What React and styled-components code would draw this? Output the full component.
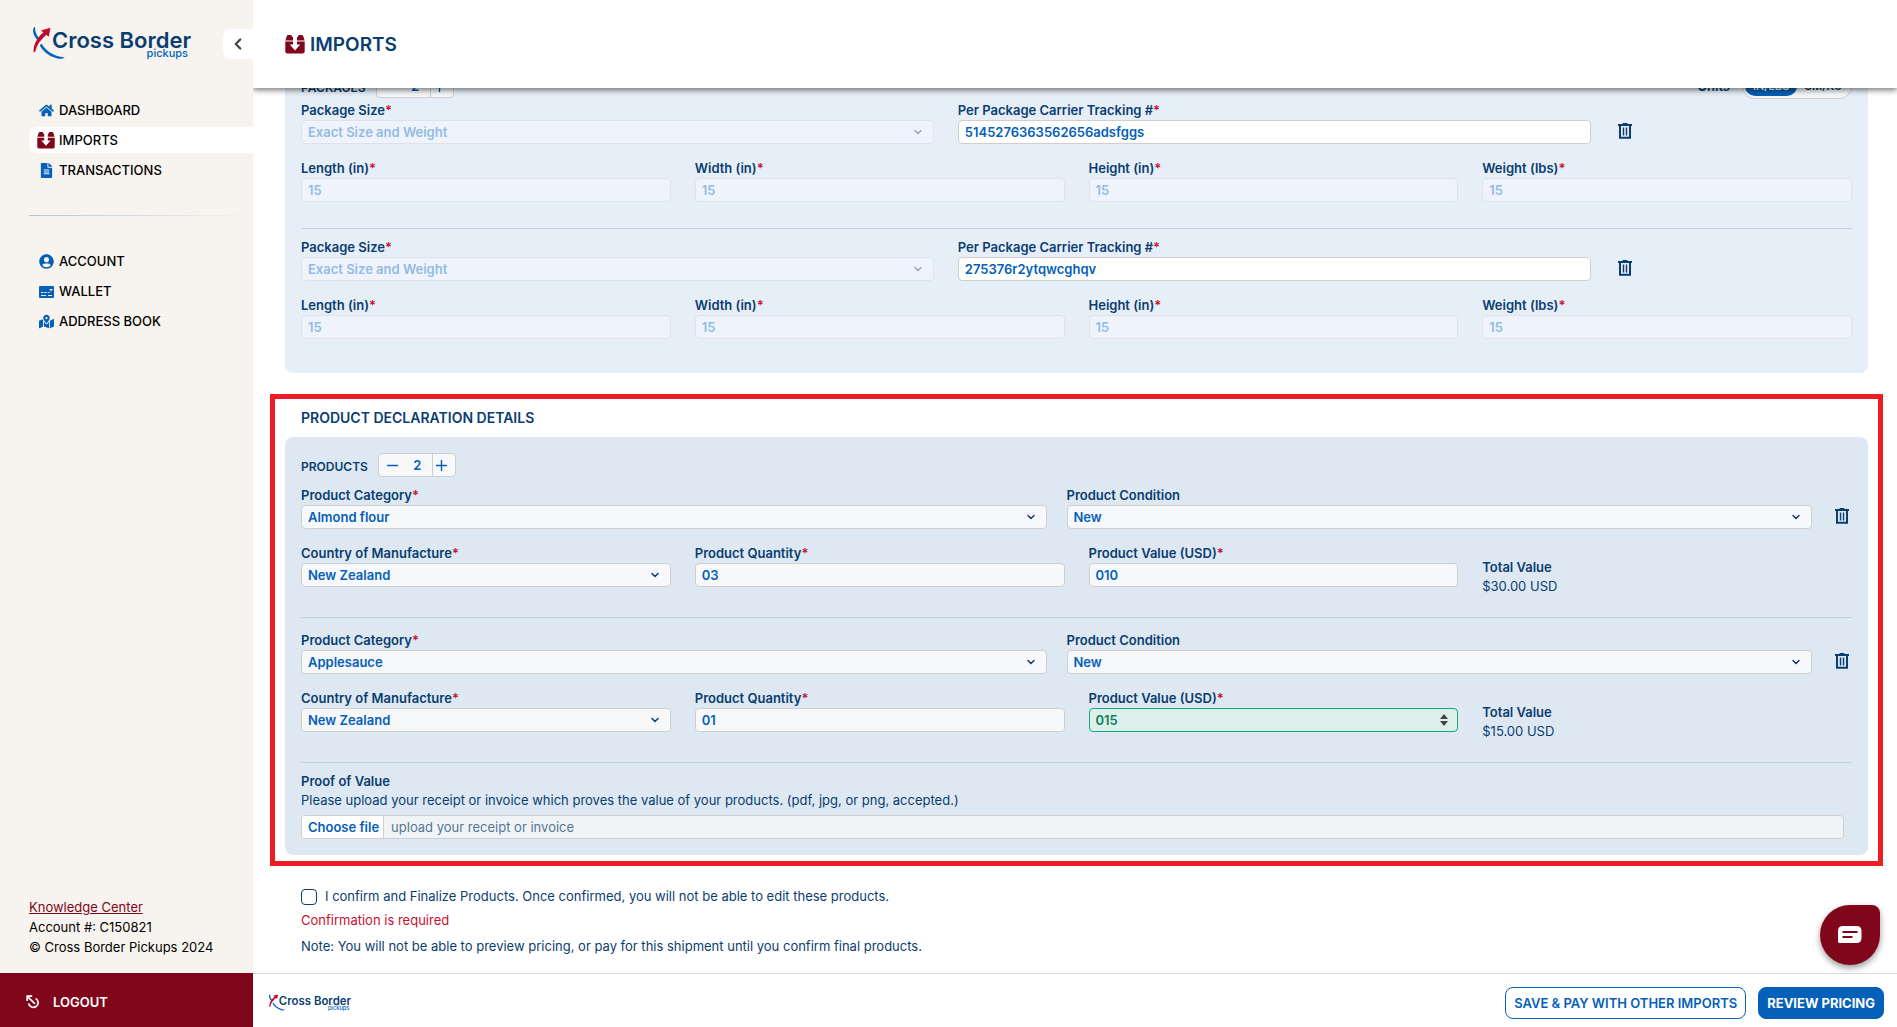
import { useLayoutEffect, useRef } from "react";
import styled, { createGlobalStyle } from "styled-components";
import { FaFileAlt, FaHome, FaMapMarkedAlt, FaUserCircle } from "react-icons/fa";
import { FiChevronDown, FiChevronLeft, FiMinus, FiPlus } from "react-icons/fi";

const ImportsIcon = ({ size }) => (
  <svg width={size} height={size} viewBox="0 0 20 20" aria-hidden="true">
    <path fill="#80071b" d="M3.4 1H6.4L7.2 3H8V6.4H.4L1.8 2.1Q2.2 1 3.4 1Z" />
    <path fill="#80071b" d="M16.6 1H13.6L12.8 3H12V6.4H19.6L18.2 2.1Q17.8 1 16.6 1Z" />
    <path fill="#80071b" d="M.3 7.4H8V10.6H4.8L10 16.4 15.2 10.6H12V7.4H19.7V17.6Q19.7 19.4 17.9 19.4H2.1Q.3 19.4.3 17.6Z" />
  </svg>
);

const WalletIcon = () => (
  <svg width="15" height="15" viewBox="0 0 15 15" aria-hidden="true">
    <rect x="0" y="2" width="15" height="12" rx="1" fill="#0560b9" />
    <path stroke="#f7f3ee" strokeWidth="1" fill="none" d="M2 8.5h2.4M5.4 8.5h2.4M8.8 8.5h1.6M2 11.5h5M9 11.5h4M10.5 5.5h3M11 7.5l2-2" />
  </svg>
);

const LogoutIcon = () => (
  <svg width="14" height="14" viewBox="0 0 14 14" fill="none" stroke="#fff" strokeWidth="1.7" aria-hidden="true">
    <path d="M9.6 3.4a4.8 4.8 0 1 1-7 5" />
    <path d="M9 8.8 2 2M1.2 6V1.2h5" />
  </svg>
);

const TrashIcon = () => (
  <svg width="14" height="16" viewBox="0 0 14 16" fill="none" stroke="#0b3d70" aria-hidden="true">
    <path strokeWidth="2" d="M2 2.5v12.3h10V2.5M0 2h14" />
    <path strokeWidth="2" d="M4.6 1h4.8" />
    <path strokeWidth="1.4" d="M5.5 4.5v8M8.5 4.5v8" />
  </svg>
);

const ChatIcon = () => (
  <svg width="24" height="18" viewBox="0 0 24 18" aria-hidden="true">
    <path fill="#fff" d="M5 0h13.5q5 0 5 5v7q0 5-5 5H1.5Q0 17 0 15.5V5q0-5 5-5Z" />
    <path stroke="#80071b" strokeWidth="2" d="M4.5 6h15M4.5 11h10" />
  </svg>
);

const SpinnerArrows = () => (
  <svg width="8" height="12" viewBox="0 0 8 12" fill="#444" aria-hidden="true">
    <path d="M4 0l4 5H0ZM4 12l4-5H0Z" />
  </svg>
);

const Logo = ({ width }) => (
  <svg width={width} viewBox="0 0 158 34" role="img" aria-label="Cross Border pickups">
    <path fill="#0565c0" d="M2.2 0C1.8 5 3.6 8.6 6.8 12L5.2 14.2C1 9.8-1.2 5.2.8.6Z" />
    <path fill="#c10a2d" d="M.6 25.6C0 17.6 4.6 10 10.4 5.6L8 3.4 17.4.8 15.8 9.8 13.4 7.8C8.4 12.6 3.8 17 2.4 24.6Z" />
    <path fill="#0565c0" d="M8.4 16.4C13.2 24.2 20.6 29.2 31.8 30.4 29.4 32 26.6 32 23.6 31.2 15.4 29 10.2 24.4 6.8 18.4Z" />
    <LogoText x="19" y="21">Cross Border</LogoText>
    <LogoSub x="155" y="30">pickups</LogoSub>
  </svg>
);

const NavItem = ({ icon, active, children }) => (
  <NavLink href="#" $active={active}>
    <NavIcon>{icon}</NavIcon>
    {children}
  </NavLink>
);

const Field = ({ id, label, required, value, type = "input", disabled, strong, valid }) => (
  <FieldBox>
    <Label htmlFor={id}>
      {label}
      {required && <Asterisk>*</Asterisk>}
    </Label>
    <ControlWrap>
      {type === "select" ? (
        <Select id={id} disabled={disabled}>
          <option>{value}</option>
        </Select>
      ) : (
        <Input id={id} defaultValue={value} disabled={disabled} $strong={strong} $valid={valid} />
      )}
      {type === "select" && (
        <Adornment $faded={disabled}>
          <FiChevronDown size={12} strokeWidth={3} />
        </Adornment>
      )}
      {valid && (
        <Adornment>
          <SpinnerArrows />
        </Adornment>
      )}
    </ControlWrap>
  </FieldBox>
);

const Stepper = ({ name, value }) => (
  <StepperBox>
    <StepButton type="button" aria-label={`Remove ${name}`}>
      <FiMinus size={17} />
    </StepButton>
    <StepValue>{value}</StepValue>
    <StepButton type="button" aria-label={`Add ${name}`} $divided>
      <FiPlus size={17} />
    </StepButton>
  </StepperBox>
);

const PackageGroup = ({ item, index }) => (
  <Group $divided={index > 0} $top={9} $bottom={26}>
    <PackageRow>
      <Field id={`size-${index}`} label="Package Size" required type="select" value="Exact Size and Weight" disabled />
      <Field id={`tracking-${index}`} label="Per Package Carrier Tracking #" required value={item.tracking} strong />
      <TrashButton type="button" aria-label="Delete package">
        <TrashIcon />
      </TrashButton>
    </PackageRow>
    <QuarterRow>
      {["Length (in)", "Width (in)", "Height (in)", "Weight (lbs)"].map((label) => (
        <Field key={label} id={`${label}-${index}`} label={label} required value="15" disabled />
      ))}
    </QuarterRow>
  </Group>
);

const ProductGroup = ({ item, index }) => (
  <Group $divided={index > 0} $top={13} $bottom={21}>
    <ProductRow>
      <Field id={`category-${index}`} label="Product Category" required type="select" value={item.category} />
      <Field id={`condition-${index}`} label="Product Condition" type="select" value="New" />
      <TrashButton type="button" aria-label="Delete product">
        <TrashIcon />
      </TrashButton>
    </ProductRow>
    <QuarterRow>
      <Field id={`country-${index}`} label="Country of Manufacture" required type="select" value="New Zealand" />
      <Field id={`quantity-${index}`} label="Product Quantity" required value={item.quantity} />
      <Field id={`value-${index}`} label="Product Value (USD)" required value={item.value} valid={item.valid} />
      <Total>
        <strong>Total Value</strong>
        <span>{item.total}</span>
      </Total>
    </QuarterRow>
  </Group>
);

const packages = [{ tracking: "5145276363562656adsfggs" }, { tracking: "275376r2ytqwcghqv" }];

const products = [
  { category: "Almond flour", quantity: "03", value: "010", total: "$30.00 USD" },
  { category: "Applesauce", quantity: "01", value: "015", total: "$15.00 USD", valid: true },
];

const App = () => {

  const scroller = useRef(null);

  // the form opens at its last section
  useLayoutEffect(() => {
    scroller.current.scrollTop = scroller.current.scrollHeight;
  }, []);

  return (
    <Shell>
      <GlobalStyle />
      <Sidebar>
        <Brand>
          <Logo width={158} />
          <Collapse type="button" aria-label="Collapse menu">
            <FiChevronLeft size={18} strokeWidth={3} />
          </Collapse>
        </Brand>
        <Nav>
          <NavItem icon={<FaHome size={15} />}>DASHBOARD</NavItem>
          <NavItem icon={<ImportsIcon size={18} />} active>IMPORTS</NavItem>
          <NavItem icon={<FaFileAlt size={15} />}>TRANSACTIONS</NavItem>
        </Nav>
        <NavDivider />
        <Nav>
          <NavItem icon={<FaUserCircle size={15} />}>ACCOUNT</NavItem>
          <NavItem icon={<WalletIcon />}>WALLET</NavItem>
          <NavItem icon={<FaMapMarkedAlt size={15} />}>ADDRESS BOOK</NavItem>
        </Nav>
        <SideInfo>
          <a href="#">Knowledge Center</a>
          <span>Account #: C150821</span>
          <span>© Cross Border Pickups 2024</span>
        </SideInfo>
        <Logout type="button">
          <LogoutIcon />
          LOGOUT
        </Logout>
      </Sidebar>

      <Page>
        <Header>
          <ImportsIcon size={20} />
          <h1>IMPORTS</h1>
        </Header>

        <Content ref={scroller}>
          <PackagePanel>
            <PanelHead>
              <PanelTitle>PACKAGES</PanelTitle>
              <Stepper name="package" value={2} />
              <Units>
                Units
                <Toggle>
                  <ToggleOption type="button" $on>IN/LBS</ToggleOption>
                  <ToggleOption type="button">CM/KG</ToggleOption>
                </Toggle>
              </Units>
            </PanelHead>
            {packages.map((item, i) => (
              <PackageGroup key={item.tracking} item={item} index={i} />
            ))}
          </PackagePanel>

          <Highlight>
            <h2>PRODUCT DECLARATION DETAILS</h2>
            <ProductPanel>
              <PanelHead $spaced>
                <PanelTitle>PRODUCTS</PanelTitle>
                <Stepper name="product" value={2} />
              </PanelHead>
              {products.map((item, i) => (
                <ProductGroup key={item.category} item={item} index={i} />
              ))}
              <Proof>
                <strong>Proof of Value</strong>
                <p>Please upload your receipt or invoice which proves the value of your products. (pdf, jpg, or png, accepted.)</p>
                <FilePicker>
                  <input type="file" />
                  <FileButton>Choose file</FileButton>
                  <FileHint>upload your receipt or invoice</FileHint>
                </FilePicker>
              </Proof>
            </ProductPanel>
          </Highlight>

          <Confirm>
            <ConfirmLabel>
              <input type="checkbox" />
              I confirm and Finalize Products. Once confirmed, you will not be able to edit these products.
            </ConfirmLabel>
            <ErrorText>Confirmation is required</ErrorText>
            <p>Note: You will not be able to preview pricing, or pay for this shipment until you confirm final products.</p>
          </Confirm>
        </Content>

        <Footer>
          <Logo width={82} />
          <Actions>
            <ActionButton type="button">SAVE &amp; PAY WITH OTHER IMPORTS</ActionButton>
            <ActionButton type="button" $primary>REVIEW PRICING</ActionButton>
          </Actions>
        </Footer>
      </Page>

      <Chat type="button" aria-label="Open chat">
        <ChatIcon />
      </Chat>
    </Shell>
  )
}

export default App

const GlobalStyle = createGlobalStyle`
  * {
    box-sizing: border-box;
  }
  body {
    margin: 0;
    color: #0b3d70;
    font-family: Inter, "Liberation Sans", sans-serif;
    font-size: 13px;
    line-height: 19px;
  }
  h1, h2, p {
    margin: 0;
  }
  button, input, select {
    font-family: inherit;
  }
  button {
    cursor: pointer;
  }
`

const Shell = styled.div`
  display: flex;
  height: 100vh;
`

const Sidebar = styled.aside`
  display: flex;
  flex-direction: column;
  width: 253px;
  flex-shrink: 0;
  background-color: #f7f3ee;
  color: #000;
  z-index: 2;
`

const Brand = styled.div`
  display: flex;
  justify-content: space-between;
  align-items: center;
  height: 30px;
  margin: 29px 0 38px;
  padding-left: 33px;
`

const LogoText = styled.text`
  font-size: 22px;
  font-weight: 600;
  fill: #0b3d70;
`

const LogoSub = styled.text`
  font-size: 11px;
  font-weight: 500;
  text-anchor: end;
  fill: #0565c0;
`

const Collapse = styled.button`
  display: flex;
  align-items: center;
  justify-content: center;
  width: 30px;
  height: 30px;
  padding: 0;
  border: none;
  border-radius: 8px 0 0 8px;
  background-color: #fff;
  color: #444;
`

const Nav = styled.nav`
  display: flex;
  flex-direction: column;
  gap: 4px;
  padding-left: 29px;
`

const NavLink = styled.a`
  display: flex;
  align-items: center;
  gap: 4px;
  height: 26px;
  padding-left: 8px;
  border-radius: 8px 0 0 8px;
  background-color: ${({ $active }) => ($active ? "#fff" : "transparent")};
  color: #000;
  font-weight: 500;
  text-decoration: none;
`

const NavIcon = styled.span`
  display: flex;
  justify-content: center;
  width: 18px;
  color: #0560b9;
`

const NavDivider = styled.div`
  height: 1px;
  margin: 32px 0 32px 29px;
  background: linear-gradient(to right, #b9c6d2, #f7f3ee);
`

const SideInfo = styled.div`
  display: flex;
  flex-direction: column;
  gap: 1px;
  margin-top: auto;
  padding: 0 0 16px 29px;

  a {
    color: #80071b;
  }
`

const Logout = styled.button`
  display: flex;
  align-items: center;
  gap: 13px;
  height: 54px;
  padding: 4px 26px 0;
  border: none;
  background-color: #80071b;
  color: #fff;
  font-size: 13px;
  font-weight: 600;
`

const Page = styled.div`
  display: flex;
  flex-direction: column;
  flex: 1;
  min-width: 0;
`

const Header = styled.header`
  display: flex;
  align-items: center;
  gap: 5px;
  height: 88px;
  flex-shrink: 0;
  padding-left: 32px;
  background-color: #fff;
  box-shadow: 0 2px 6px rgba(0, 0, 0, 0.55);
  z-index: 1;

  h1 {
    font-size: 19px;
    font-weight: 600;
  }
`

const Content = styled.main`
  flex: 1;
  min-height: 0;
  overflow-y: auto;
  scrollbar-width: none;
`

const Panel = styled.section`
  padding: 16px;
  border-radius: 8px;
`

const PackagePanel = styled(Panel)`
  margin: 0 29px 21px 32px;
  padding-bottom: 8px;
  background-color: #e6eef7;
`

const ProductPanel = styled(Panel)`
  background-color: #dde8f2;
`

const Highlight = styled.div`
  margin: 0 14px 0 17px;
  padding: 0 10px 6px;
  border: 5px solid #ee1c25;

  h2 {
    padding: 9px 16px 10px;
    font-size: 14px;
    font-weight: 600;
  }
`

const PanelHead = styled.div`
  display: flex;
  align-items: center;
  gap: 10px;
  height: 24px;
  margin-bottom: ${({ $spaced }) => ($spaced ? 9 : 3)}px;
`

const PanelTitle = styled.span`
  padding-top: 2px;
  font-size: 12px;
  font-weight: 600;
`

const StepperBox = styled.div`
  display: flex;
  width: 78px;
  height: 24px;
  border: 1px solid #cfcfcf;
  border-radius: 4px;
  background-color: #f6f8fa;
  color: #0560b9;
`

const StepButton = styled.button`
  display: flex;
  align-items: center;
  justify-content: ${({ $divided }) => ($divided ? "flex-start" : "center")};
  width: ${({ $divided }) => ($divided ? 23 : 28)}px;
  padding: 0;
  border: none;
  border-left: ${({ $divided }) => ($divided ? "1px solid #cfcfcf" : "none")};
  background: none;
  color: inherit;
`

const StepValue = styled.span`
  flex: 1;
  padding-right: 4px;
  font-weight: 600;
  line-height: 22px;
  text-align: center;
`

const Units = styled.div`
  display: flex;
  align-items: center;
  gap: 12px;
  margin-left: auto;
  font-weight: 600;
`

const Toggle = styled.div`
  display: flex;
  width: 110px;
  padding: 2px;
  border: 1px solid #cfcfcf;
  border-radius: 13px;
  background-color: #f6f8fa;
`

const ToggleOption = styled.button`
  flex: 1;
  height: 20px;
  padding: 0;
  border: none;
  border-radius: 10px;
  background-color: ${({ $on }) => ($on ? "#0560b9" : "transparent")};
  color: ${({ $on }) => ($on ? "#fff" : "#0b3d70")};
  font-size: 11px;
  font-weight: 600;
`

const Group = styled.div`
  display: flex;
  flex-direction: column;
  gap: 15px;
  padding-top: ${({ $divided, $top }) => ($divided ? $top : 0)}px;
  padding-bottom: ${({ $bottom }) => $bottom}px;
  border-top: ${({ $divided }) => ($divided ? "1px solid #bfd1e3" : "none")};
`

const PackageRow = styled.div`
  display: grid;
  grid-template-columns: 8fr 8fr 3fr;
  gap: 24px;
`

const ProductRow = styled.div`
  display: grid;
  grid-template-columns: 1fr 1fr 20px;
  gap: 20px;
`

const QuarterRow = styled.div`
  display: grid;
  grid-template-columns: repeat(4, 1fr);
  gap: 24px;
`

const FieldBox = styled.div`
  display: flex;
  flex-direction: column;
  min-width: 0;
`

const Label = styled.label`
  font-weight: 600;
`

const Asterisk = styled.span`
  color: #c8102e;
`

const ControlWrap = styled.div`
  position: relative;
  display: flex;
`

const Input = styled.input`
  width: 100%;
  height: 24px;
  padding: 0 6px;
  border: 1px solid ${({ $valid }) => ($valid ? "#12ac7c" : "#cfcfcf")};
  border-radius: 4px;
  background-color: ${({ $strong, $valid }) => ($valid ? "#dcefea" : $strong ? "#fff" : "#f6f8fa")};
  color: ${({ $valid }) => ($valid ? "#128058" : "#0560b9")};
  font-size: 13px;
  font-weight: 600;

  &:disabled {
    border-color: #dfe3e8;
    background-color: #eff4fc;
    color: #93bbe3;
    opacity: 1;
  }
`

const Select = styled(Input).attrs({ as: "select" })`
  appearance: none;
`

const Adornment = styled.span`
  position: absolute;
  top: 0;
  right: 10px;
  display: flex;
  align-items: center;
  height: 24px;
  opacity: ${({ $faded }) => ($faded ? 0.4 : 1)};
  pointer-events: none;
`

const TrashButton = styled.button`
  display: flex;
  align-items: center;
  justify-self: start;
  align-self: end;
  height: 26px;
  padding: 0 3px;
  border: none;
  background: none;
`

const Total = styled.div`
  display: flex;
  flex-direction: column;
  padding-top: 14px;

  strong {
    font-weight: 600;
  }
`

const Proof = styled.div`
  display: flex;
  flex-direction: column;
  padding-top: 9px;
  border-top: 1px solid #bfd1e3;

  strong {
    font-weight: 600;
  }
`

const FilePicker = styled.label`
  position: relative;
  display: flex;
  height: 24px;
  margin: 5px 8px 0 0;
  border: 1px solid #cfcfcf;
  border-radius: 4px;
  background-color: #f1f4f7;
  line-height: 22px;
  overflow: hidden;

  input {
    position: absolute;
    opacity: 0;
  }
`

const FileButton = styled.span`
  padding: 0 4px 0 6px;
  border-right: 1px solid #cfcfcf;
  background-color: #fff;
  color: #0560b9;
  font-weight: 600;
`

const FileHint = styled.span`
  padding-left: 7px;
  color: #557594;
`

const Confirm = styled.div`
  display: flex;
  flex-direction: column;
  padding: 21px 48px 17px;
`

const ConfirmLabel = styled.label`
  display: flex;
  align-items: center;
  gap: 8px;

  input {
    width: 16px;
    height: 16px;
    margin: 0;
    border: 1px solid #0b3d70;
    border-radius: 4px;
    background-color: #fff;
    appearance: none;
  }
`

const ErrorText = styled.p`
  && {
    margin: 5px 0 7px;
  }
  color: #c8102e;
`

const Footer = styled.footer`
  display: flex;
  align-items: center;
  justify-content: space-between;
  height: 54px;
  flex-shrink: 0;
  padding: 4px 13px 0 16px;
  border-top: 1px solid #dcdcdc;
  background-color: #fff;
`

const Actions = styled.div`
  display: flex;
  gap: 12px;
`

const ActionButton = styled.button`
  height: 32px;
  padding: 0 8px;
  border: 1px solid #0560b9;
  border-radius: 8px;
  background-color: ${({ $primary }) => ($primary ? "#0560b9" : "#fff")};
  color: ${({ $primary }) => ($primary ? "#fff" : "#0560b9")};
  font-size: 13px;
  font-weight: ${({ $primary }) => ($primary ? 700 : 600)};
`

const Chat = styled.button`
  position: fixed;
  right: 17px;
  bottom: 62px;
  display: flex;
  align-items: center;
  justify-content: center;
  width: 60px;
  height: 60px;
  padding: 0;
  border: none;
  border-radius: 50% 8px 50% 50%;
  background-color: #80071b;
  box-shadow: 0 3px 6px rgba(0, 0, 0, 0.4);
`
